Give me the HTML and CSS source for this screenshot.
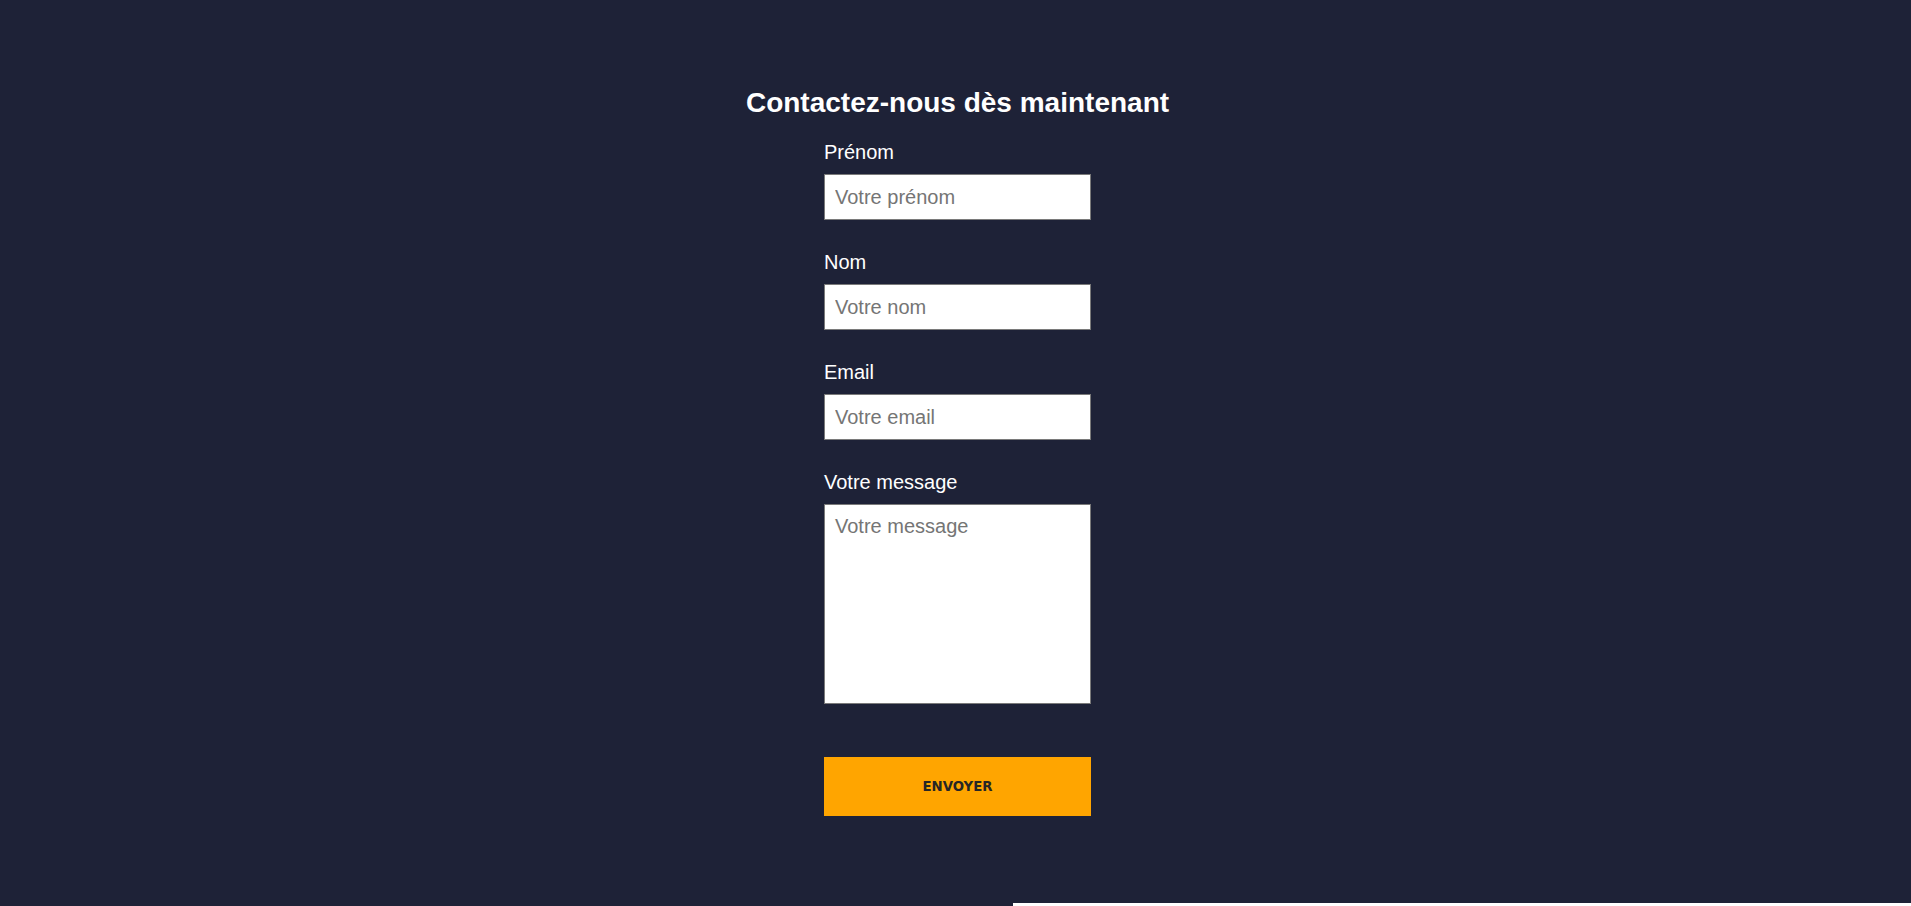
FILE: index.html
```html
<!DOCTYPE html>
<html lang="fr">
<head>
<meta charset="utf-8">
<title>Contact</title>
<link rel="stylesheet" href="styles.css">
</head>
<body>
<main class="contact">
  <h2 class="contact-title">Contactez-nous dès maintenant</h2>
  <form class="contact-form">
    <div class="field">
      <label class="field-label" for="prenom">Prénom</label>
      <input class="field-input" id="prenom" type="text" placeholder="Votre prénom">
    </div>
    <div class="field">
      <label class="field-label" for="nom">Nom</label>
      <input class="field-input" id="nom" type="text" placeholder="Votre nom">
    </div>
    <div class="field">
      <label class="field-label" for="email">Email</label>
      <input class="field-input" id="email" type="email" placeholder="Votre email">
    </div>
    <div class="field field-message">
      <label class="field-label" for="message">Votre message</label>
      <textarea class="field-input field-textarea" id="message" placeholder="Votre message"></textarea>
    </div>
    <button class="submit-btn" type="button">ENVOYER</button>
  </form>
</main>
<div class="next-section"><div class="next-section-fill"></div></div>
</body>
</html>
```

FILE: styles.css
```css
html, body {
  margin: 0;
  padding: 0;
}

body {
  background: #1e2237;
  font-family: "Liberation Sans", Arial, sans-serif;
  color: #ffffff;
  overflow: hidden;
}

.contact {
  box-sizing: border-box;
  height: 903px;
  padding-top: 87px;
  padding-left: 4px;
  display: flex;
  flex-direction: column;
  align-items: center;
}

.contact-title {
  margin: 0 0 22px;
  font-size: 28px;
  line-height: 32px;
  font-weight: bold;
  color: #ffffff;
}

.contact-form {
  width: 267px;
  display: flex;
  flex-direction: column;
}

.field {
  display: flex;
  flex-direction: column;
  margin-bottom: 31px;
}

.field-message {
  margin-bottom: 53px;
}

.field-label {
  font-size: 20px;
  line-height: 23px;
  margin-bottom: 10px;
  color: #ffffff;
}

.field-input {
  box-sizing: border-box;
  width: 267px;
  height: 46px;
  margin: 0;
  padding: 11px 10px;
  border: 1px solid #7a7a7a;
  border-radius: 0;
  background: #ffffff;
  font-family: "Liberation Sans", Arial, sans-serif;
  font-size: 20px;
  line-height: 23px;
  color: #222222;
  outline: none;
}

.field-input::placeholder {
  color: #757575;
}

.field-textarea {
  height: 200px;
  display: block;
  resize: none;
  padding: 10px 10px;
}

.submit-btn {
  box-sizing: border-box;
  width: 267px;
  height: 59px;
  margin: 0;
  border: none;
  border-radius: 0;
  background: #ffa500;
  color: #262626;
  font-family: "DejaVu Sans", Verdana, sans-serif;
  font-size: 13.3px;
  font-weight: bold;
  cursor: pointer;
}

.next-section {
  display: flex;
  justify-content: flex-end;
}

.next-section-fill {
  width: 898px;
  height: 40px;
  background: #ffffff;
}
```
